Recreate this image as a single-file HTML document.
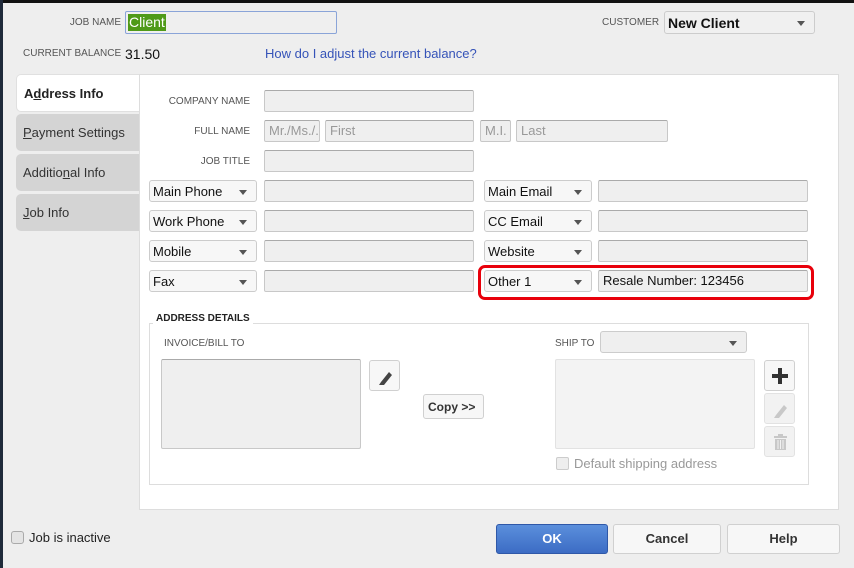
<!DOCTYPE html>
<html><head><style>
*{box-sizing:border-box;margin:0;padding:0}
body{width:854px;height:568px;background:#eeeeee;font-family:"Liberation Sans",sans-serif;position:relative;overflow:hidden;color:#222}
.a{position:absolute}
.lbl{position:absolute;font-size:10px;color:#555;text-align:right;white-space:nowrap}
.inp{position:absolute;background:#efefef;border:1px solid #c8c8c8;border-top-color:#aaa;border-radius:2px;height:22px;font-size:13px;color:#999;padding:2px 4px;white-space:nowrap;overflow:hidden}
.dd{position:absolute;background:#f7f7f7;border:1px solid #ccc;border-radius:3px;height:22px;font-size:13px;color:#111;padding:3px 3px;white-space:nowrap}
.dd:after{content:"";position:absolute;right:9px;top:9px;border-left:4px solid transparent;border-right:4px solid transparent;border-top:5px solid #555}
.tab{position:absolute;left:16px;width:123px;height:37px;background:#d4d4d4;border-radius:5px 0 0 5px;font-size:13px;color:#333;padding:11px 7px}
.btn{position:absolute;background:#f7f7f7;border:1px solid #d0d0d0;border-radius:3px}
</style></head><body>
<div class="a" style="left:0;top:0;width:854px;height:3px;background:#111"></div>
<div class="a" style="left:0;top:0;width:3px;height:568px;background:#1f2a3a"></div>

<div class="lbl" style="right:733px;top:17px">JOB NAME</div>
<div class="a" style="left:125px;top:11px;width:212px;height:23px;border:1px solid #8aa4d8;border-radius:2px;background:#efefef"></div>
<div class="a" style="left:128px;top:14px;height:17px;background:#4f9a18;color:#fff;font-size:14px;padding:0 1px;line-height:17px">Client</div>
<div class="lbl" style="left:602px;top:17px">CUSTOMER</div>
<div class="dd" style="left:664px;top:11px;width:151px;height:23px;font-weight:bold;font-size:14px;background:#f0f0f0">New Client</div>

<div class="lbl" style="left:23px;top:48px">CURRENT BALANCE</div>
<div class="a" style="left:125px;top:46px;font-size:14px;color:#111">31.50</div>
<div class="a" style="left:265px;top:46px;font-size:13px;color:#3553b8">How do I adjust the current balance?</div>

<div class="a" style="left:139px;top:74px;width:700px;height:436px;background:#fff;border:1px solid #ddd"></div>
<div class="tab" style="top:74px;background:#fff;font-weight:bold;color:#222;height:38px;border:1px solid #e0e0e0;border-right:none"><u style="text-decoration:none">A<u>d</u>dress Info</u></div>
<div class="tab" style="top:114px"><u>P</u>ayment Settings</div>
<div class="tab" style="top:154px">Additio<u>n</u>al Info</div>
<div class="tab" style="top:194px"><u>J</u>ob Info</div>

<div class="lbl" style="right:604px;top:96px">COMPANY NAME</div>
<div class="lbl" style="right:604px;top:126px">FULL NAME</div>
<div class="lbl" style="right:604px;top:156px">JOB TITLE</div>
<div class="inp" style="left:264px;top:90px;width:210px"></div>
<div class="inp" style="left:264px;top:120px;width:56px">Mr./Ms./..</div>
<div class="inp" style="left:325px;top:120px;width:149px">First</div>
<div class="inp" style="left:480px;top:120px;width:31px">M.I.</div>
<div class="inp" style="left:516px;top:120px;width:152px">Last</div>
<div class="inp" style="left:264px;top:150px;width:210px"></div>

<div class="dd" style="left:149px;top:180px;width:108px">Main Phone</div>
<div class="dd" style="left:149px;top:210px;width:108px">Work Phone</div>
<div class="dd" style="left:149px;top:240px;width:108px">Mobile</div>
<div class="dd" style="left:149px;top:270px;width:108px">Fax</div>
<div class="inp" style="left:264px;top:180px;width:210px"></div>
<div class="inp" style="left:264px;top:210px;width:210px"></div>
<div class="inp" style="left:264px;top:240px;width:210px"></div>
<div class="inp" style="left:264px;top:270px;width:210px"></div>
<div class="dd" style="left:484px;top:180px;width:108px">Main Email</div>
<div class="dd" style="left:484px;top:210px;width:108px">CC Email</div>
<div class="dd" style="left:484px;top:240px;width:108px">Website</div>
<div class="dd" style="left:484px;top:270px;width:108px">Other 1</div>
<div class="inp" style="left:598px;top:180px;width:210px"></div>
<div class="inp" style="left:598px;top:210px;width:210px"></div>
<div class="inp" style="left:598px;top:240px;width:210px"></div>
<div class="inp" style="left:598px;top:270px;width:210px;color:#111">Resale Number: 123456</div>
<div class="a" style="left:478px;top:265px;width:336px;height:35px;border:3px solid #e8000b;border-radius:7px"></div>

<div class="a" style="left:149px;top:323px;width:660px;height:162px;border:1px solid #ddd"></div>
<div class="a" style="left:153px;top:313px;background:#fff;padding:0 3px;font-size:10px;font-weight:bold;color:#222">ADDRESS DETAILS</div>
<div class="lbl" style="left:164px;top:338px">INVOICE/BILL TO</div>
<div class="inp" style="left:161px;top:359px;width:200px;height:90px"></div>
<div class="btn" style="left:369px;top:360px;width:31px;height:31px"><svg width="31" height="31"><path d="M11 21 L19 11 L22 14 L14 24 Z M9 24 L11 21 L14 24 Z" fill="#444"/></svg></div>
<div class="btn" style="left:423px;top:394px;width:61px;height:25px;font-size:12px;font-weight:bold;color:#333;padding:5px 4px">Copy &gt;&gt;</div>
<div class="lbl" style="left:555px;top:338px">SHIP TO</div>
<div class="dd" style="left:600px;top:331px;width:147px;background:#efefef"></div>
<div class="inp" style="left:555px;top:359px;width:200px;height:90px;background:#f3f3f3;border-color:#e2e2e2"></div>
<div class="btn" style="left:764px;top:360px;width:31px;height:31px"><svg width="31" height="31"><path d="M13 7h4v6h6v4h-6v6h-4v-6H7v-4h6z" fill="#333"/></svg></div>
<div class="btn" style="left:764px;top:393px;width:31px;height:31px;background:#f2f2f2;border-color:#e2e2e2"><svg width="31" height="31"><path d="M11 21 L19 11 L22 14 L14 24 Z M9 24 L11 21 L14 24 Z" fill="#c8c8c8"/></svg></div>
<div class="btn" style="left:764px;top:426px;width:31px;height:31px;background:#f2f2f2;border-color:#e2e2e2"><svg width="31" height="31"><path d="M9 9h13v2H9z M13 7h5v2h-5z M10 12h11v11H10z" fill="#c8c8c8"/><path d="M13 13v9M15.5 13v9M18 13v9" stroke="#f2f2f2" stroke-width="1"/></svg></div>
<div class="a" style="left:556px;top:457px;width:13px;height:13px;border:1px solid #ccc;border-radius:2px;background:#eee"></div>
<div class="a" style="left:574px;top:456px;font-size:13px;color:#999">Default shipping address</div>

<div class="a" style="left:11px;top:531px;width:13px;height:13px;border:1px solid #aaa;border-radius:3px;background:#e4e4e4"></div>
<div class="a" style="left:29px;top:530px;font-size:13px;color:#222">Job is inactive</div>
<div class="a" style="left:496px;top:524px;width:112px;height:30px;background:linear-gradient(#5b8fdc,#3c6cc4);border:1px solid #2f58a8;border-radius:3px;color:#fff;font-size:13px;font-weight:bold;text-align:center;line-height:28px">OK</div>
<div class="btn" style="left:613px;top:524px;width:108px;height:30px;font-size:13px;font-weight:bold;color:#333;text-align:center;line-height:28px">Cancel</div>
<div class="btn" style="left:727px;top:524px;width:113px;height:30px;font-size:13px;font-weight:bold;color:#333;text-align:center;line-height:28px">Help</div>
</body></html>
